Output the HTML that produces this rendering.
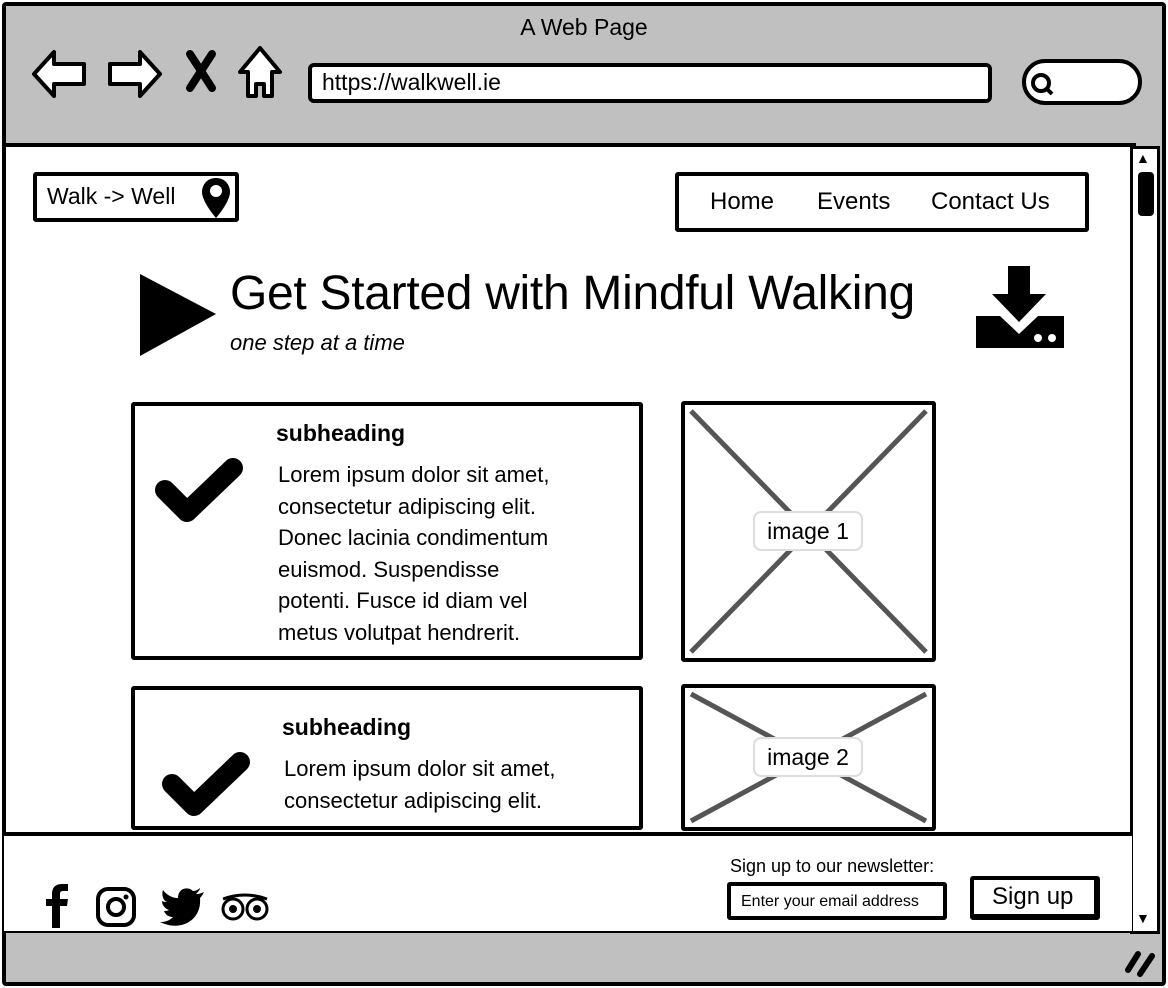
<!DOCTYPE html>
<html><head><style>
*{margin:0;padding:0;box-sizing:border-box}
body{width:1168px;height:988px;background:#fff;position:relative;overflow:hidden;font-family:"Liberation Sans",sans-serif;color:#000}
.a{position:absolute}
.b{border:4px solid #000;border-radius:3px;background:#fff}
</style></head><body>
<div class="a" style="left:2px;top:2px;width:1164px;height:984px;border:4px solid #000;background:#c0c0c0;border-radius:4px"></div>
<div class="a" style="left:0;top:14px;width:1168px;text-align:center;font-size:23px">A Web Page</div>
<svg class="a" style="left:30px;top:44px" width="260" height="60" viewBox="0 0 260 60">
<g fill="#fff" stroke="#000" stroke-width="4" stroke-linejoin="round">
<path d="M4 30 L24 8 L24 20 L54 20 L54 40 L24 40 L24 52 Z"/>
<path d="M130 30 L110 8 L110 20 L80 20 L80 40 L110 40 L110 52 Z"/>
<path d="M230 4 L250 28 L242 28 L242 52 L234 52 L234 40 L226 40 L226 52 L218 52 L218 28 L210 28 Z"/>
</g>
<path d="M160 10 L182 44 M182 10 L160 44" stroke="#000" stroke-width="8" stroke-linecap="round"/>
</svg>
<div class="a b" style="left:308px;top:63px;width:684px;height:40px;border-radius:6px;font-size:23px;padding:2px 10px">https://walkwell.ie</div>
<div class="a b" style="left:1022px;top:59px;width:120px;height:46px;border-radius:23px"></div>
<svg class="a" style="left:1028px;top:70px" width="30" height="28"><circle cx="13" cy="13" r="8" fill="none" stroke="#000" stroke-width="4"/><path d="M18 18 L24 24" stroke="#000" stroke-width="4"/></svg>
<div class="a" style="left:2px;top:143px;width:1134px;height:790px;border:4px solid #000;background:#fff"></div>
<div class="a" style="left:1130px;top:146px;width:30px;height:788px;border:3px solid #000;background:#fff"></div>
<div class="a" style="left:1138px;top:172px;width:16px;height:44px;background:#000;border-radius:4px"></div>
<div class="a" style="left:1136px;top:150px;font-size:14px">▲</div>
<div class="a" style="left:1136px;top:910px;font-size:14px">▼</div>
<div class="a b" style="left:33px;top:172px;width:206px;height:50px;font-size:23px;padding:7px 10px">Walk -&gt; Well</div>
<svg class="a" style="left:200px;top:176px" width="32" height="44" viewBox="0 0 32 44"><path d="M16 2 C6 2 2 10 2 16 C2 26 16 42 16 42 C16 42 30 26 30 16 C30 10 26 2 16 2 Z" fill="#000"/><circle cx="16" cy="15" r="6" fill="#fff"/></svg>
<div class="a b" style="left:675px;top:172px;width:414px;height:60px;font-size:23px"></div>
<div class="a" style="left:710px;top:188px;font-size:24px">Home</div>
<div class="a" style="left:817px;top:188px;font-size:24px">Events</div>
<div class="a" style="left:931px;top:188px;font-size:24px">Contact Us</div>
<svg class="a" style="left:138px;top:272px" width="80" height="86"><path d="M2 2 L78 42 L2 84 Z" fill="#000"/></svg>
<div class="a" style="left:230px;top:266px;font-size:48px;white-space:nowrap;letter-spacing:-0.3px">Get Started with Mindful Walking</div>
<div class="a" style="left:230px;top:330px;font-size:22px;font-style:italic">one step at a time</div>
<svg class="a" style="left:974px;top:266px" width="92" height="86" viewBox="0 0 92 86"><path d="M34 0 H56 V28 H72 L45 56 L18 28 H34 Z" fill="#000"/><path d="M2 50 H26 L45 68 L64 50 H90 V82 H2 Z" fill="#000"/><circle cx="64" cy="72" r="4" fill="#fff"/><circle cx="78" cy="72" r="4" fill="#fff"/></svg>
<div class="a b" style="left:131px;top:402px;width:512px;height:258px"></div>
<svg class="a" style="left:155px;top:458px" width="88" height="68"><path d="M10 32 L32 54 L78 10" fill="none" stroke="#000" stroke-width="20" stroke-linecap="round" stroke-linejoin="round"/></svg>
<div class="a" style="left:276px;top:420px;font-size:23px;font-weight:bold">subheading</div>
<div class="a" style="left:278px;top:459px;width:360px;font-size:22px;line-height:31.5px;white-space:nowrap">Lorem ipsum dolor sit amet,<br>consectetur adipiscing elit.<br>Donec lacinia condimentum<br>euismod. Suspendisse<br>potenti. Fusce id diam vel<br>metus volutpat hendrerit.</div>
<div class="a b" style="left:681px;top:401px;width:255px;height:261px;overflow:hidden"><svg width="247" height="253"><path d="M6 6 L241 247 M241 6 L6 247" stroke="#555" stroke-width="5"/></svg></div>
<div class="a" style="left:753px;top:511px;width:110px;height:40px;background:#fff;border:2px solid #ddd;border-radius:8px;font-size:23px;text-align:center;line-height:36px">image 1</div>
<div class="a b" style="left:131px;top:686px;width:512px;height:144px"></div>
<svg class="a" style="left:162px;top:752px" width="88" height="68"><path d="M10 32 L32 54 L78 10" fill="none" stroke="#000" stroke-width="20" stroke-linecap="round" stroke-linejoin="round"/></svg>
<div class="a" style="left:282px;top:714px;font-size:23px;font-weight:bold">subheading</div>
<div class="a" style="left:284px;top:753px;width:340px;font-size:22px;line-height:31.5px">Lorem ipsum dolor sit amet, consectetur adipiscing elit.</div>
<div class="a b" style="left:681px;top:684px;width:255px;height:147px;overflow:hidden"><svg width="247" height="139"><path d="M6 6 L241 133 M241 6 L6 133" stroke="#555" stroke-width="5"/></svg></div>
<div class="a" style="left:753px;top:737px;width:110px;height:40px;background:#fff;border:2px solid #ddd;border-radius:8px;font-size:23px;text-align:center;line-height:36px">image 2</div>
<div class="a" style="left:4px;top:832px;width:1128px;height:99px;border-top:4px solid #000;background:#fff"></div>
<svg class="a" style="left:42px;top:884px" width="28" height="44" viewBox="0 0 28 44"><path d="M10 44 V22 H4 V15 H10 V10 C10 3 14 0 20 0 H26 V7 H21 C18 7 18 9 18 11 V15 H26 L25 22 H18 V44 Z"/></svg>
<svg class="a" style="left:95px;top:886px" width="42" height="42"><rect x="3" y="3" width="36" height="36" rx="10" fill="none" stroke="#000" stroke-width="4"/><circle cx="21" cy="21" r="8" fill="none" stroke="#000" stroke-width="4"/><circle cx="31" cy="11" r="2.5"/></svg>
<svg class="a" style="left:160px;top:886px" width="46" height="40" viewBox="0 0 46 40"><path d="M44 6 C40 8 38 8 36 8 C38 6 40 4 40 2 C38 4 35 5 33 5 C28 0 18 2 18 12 C11 12 6 8 3 4 C1 10 4 15 7 16 C5 16 4 16 2 15 C2 20 6 23 9 24 C7 25 5 25 4 25 C6 30 10 31 13 31 C9 35 5 36 0 36 C20 46 42 35 40 12 C42 10 43 8 44 6 Z"/></svg>
<svg class="a" style="left:220px;top:893px" width="50" height="30"><circle cx="13" cy="16" r="10" fill="none" stroke="#000" stroke-width="3"/><circle cx="37" cy="16" r="10" fill="none" stroke="#000" stroke-width="3"/><circle cx="13" cy="16" r="4"/><circle cx="37" cy="16" r="4"/><path d="M3 6 Q25 -2 47 6" fill="none" stroke="#000" stroke-width="3"/></svg>
<div class="a" style="left:730px;top:856px;font-size:18px">Sign up to our newsletter:</div>
<div class="a b" style="left:727px;top:882px;width:220px;height:38px;font-size:16px;padding:7px 10px;white-space:nowrap">Enter your email address</div>
<div class="a b" style="left:970px;top:876px;width:130px;height:44px;font-size:24px;padding:3px 18px;border-bottom-width:6px;border-right-width:6px">Sign up</div>
<svg class="a" style="left:1124px;top:950px" width="32" height="28"><path d="M14 4 L4 20 M28 6 L16 24" stroke="#000" stroke-width="6" stroke-linecap="round"/></svg>
</body></html>
